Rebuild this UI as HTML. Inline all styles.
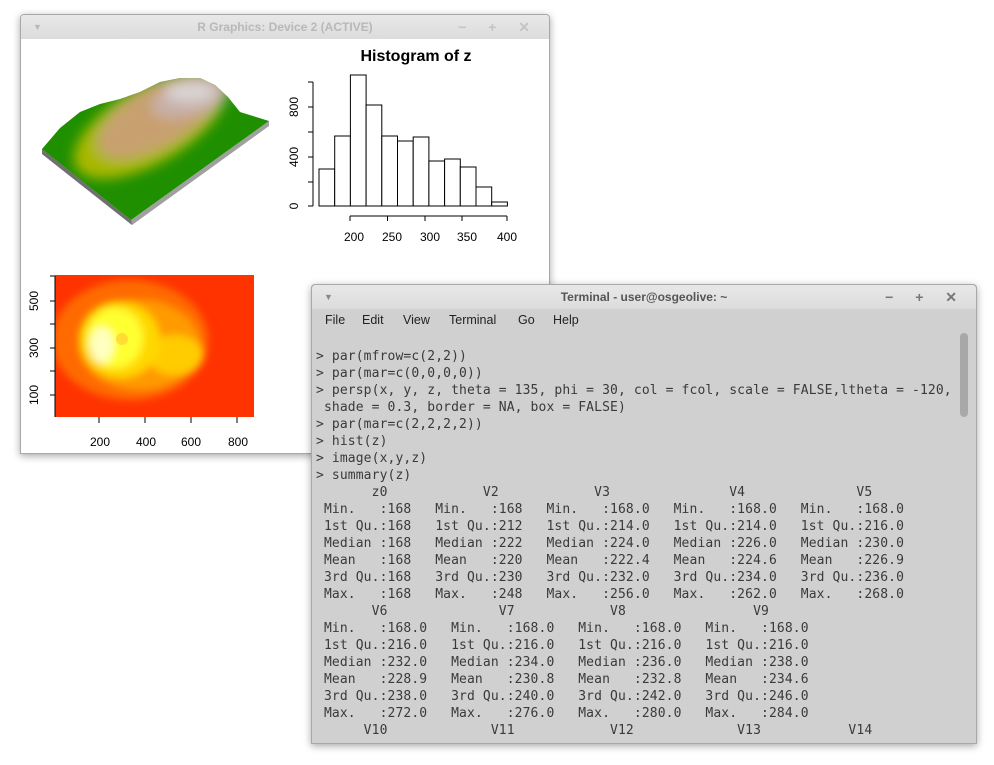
<!DOCTYPE html>
<html><head><meta charset="utf-8"><style>
body{margin:0;width:994px;height:765px;background:#fff;position:relative;overflow:hidden;font-family:"Liberation Sans",sans-serif}
.win{position:absolute;border:1px solid #a8a8a8;border-radius:4px 4px 0 0;box-shadow:0 2px 8px rgba(0,0,0,.35)}
.tb{height:24px;background:linear-gradient(#e8e8e8,#dcdcdc);position:relative;border-radius:4px 4px 0 0;font-size:12px;text-align:center;line-height:24px}
.ctl{position:absolute;right:10px;top:0;font-size:14px;letter-spacing:9px}
pre{margin:0;font-family:"DejaVu Sans Mono","Liberation Mono",monospace;font-size:13px;letter-spacing:.12px;line-height:17px;color:#3a3a3a}
.mn span{position:absolute;top:0}
</style></head><body>
<div class="win" style="left:20px;top:14px;width:528px;height:438px;background:#fff">
 <div class="tb" style="color:#b8b8b8;font-weight:bold">R Graphics: Device 2 (ACTIVE)<span style="position:absolute;left:12px;top:0;font-size:9px">▼</span><span class="ctl" style="color:#c4c4c4">− + ✕</span></div>
</div>
<svg style="position:absolute;left:0;top:0" width="994" height="765">
 <defs>
  <filter id="bl" x="-20%" y="-20%" width="140%" height="140%"><feGaussianBlur stdDeviation="6"/></filter>
  <filter id="bl2" x="-20%" y="-20%" width="140%" height="140%"><feGaussianBlur stdDeviation="4"/></filter>
  <clipPath id="ter"><polygon points="42,149 60,128 80,112 100,104 120,99 140,92 160,82 180,78 200,78 215,85 228,97 240,112 269,121 131,220"/></clipPath>
  <clipPath id="img"><rect x="55" y="275" width="199" height="142"/></clipPath>
 </defs>
 <polygon points="42,149 131,220 269,121 269,126 132,225 42,154" fill="#a0a0a0"/>
 <polygon points="42,149 42,154 132,225 131,220" fill="#707070"/>
 <g clip-path="url(#ter)">
  <rect x="40" y="70" width="240" height="160" fill="#1f8f00"/>
  <g filter="url(#bl)">
   <ellipse cx="150" cy="125" rx="85" ry="38" transform="rotate(-30 150 125)" fill="#a9b800"/>
   <ellipse cx="160" cy="115" rx="70" ry="30" transform="rotate(-30 160 115)" fill="#c8a070"/>
   <ellipse cx="190" cy="98" rx="40" ry="18" transform="rotate(-15 190 98)" fill="#c8b0a8"/>
   <ellipse cx="190" cy="92" rx="25" ry="10" fill="#d8d4d4"/>
  </g>
 </g>
 <text x="416" y="61" font-size="16" font-weight="bold" text-anchor="middle" font-family="Liberation Sans">Histogram of z</text>
 <g fill="#fff" stroke="#000" stroke-width="1">
  <rect x="319" y="169" width="15.7" height="37"/><rect x="334.7" y="136" width="15.7" height="70"/><rect x="350.4" y="75" width="15.7" height="131"/><rect x="366.1" y="105" width="15.7" height="101"/><rect x="381.8" y="136" width="15.7" height="70"/><rect x="397.5" y="141" width="15.7" height="65"/><rect x="413.2" y="137" width="15.7" height="69"/><rect x="428.9" y="161" width="15.7" height="45"/><rect x="444.6" y="159" width="15.7" height="47"/><rect x="460.3" y="167" width="15.7" height="39"/><rect x="476" y="187" width="15.7" height="19"/><rect x="491.7" y="202" width="15.7" height="4"/>
 </g>
 <g stroke="#000" fill="none"><path d="M350,216H507M350,216v5M387.5,216v5M425,216v5M462,216v5M507,216v5"/><path d="M313,82V206M313,82h-5M313,107h-5M313,132h-5M313,157h-5M313,182h-5M313,206h-5"/></g>
 <g font-size="12" font-family="Liberation Sans" text-anchor="middle"><text x="354" y="241">200</text><text x="392" y="241">250</text><text x="430" y="241">300</text><text x="467" y="241">350</text><text x="507" y="241">400</text></g>
 <g font-size="12" font-family="Liberation Sans" text-anchor="middle"><text transform="translate(298,206) rotate(-90)">0</text><text transform="translate(298,157) rotate(-90)">400</text><text transform="translate(298,107) rotate(-90)">800</text></g>
 <g clip-path="url(#img)">
  <rect x="55" y="275" width="199" height="142" fill="#ff3300"/>
  <g filter="url(#bl2)">
   <ellipse cx="130" cy="340" rx="78" ry="60" fill="#ff6a00"/>
   <ellipse cx="140" cy="345" rx="60" ry="45" fill="#ff9a00"/>
   <ellipse cx="175" cy="355" rx="28" ry="20" fill="#ffcc00"/>
   <ellipse cx="120" cy="340" rx="40" ry="38" fill="#ffd800"/>
   <ellipse cx="115" cy="338" rx="28" ry="30" fill="#ffff30"/>
   <ellipse cx="102" cy="345" rx="12" ry="18" fill="#ffffc0"/>
  </g>
  <circle cx="122" cy="339" r="6" fill="#ffdd33"/>
 </g>
 <g stroke="#000" fill="none"><path d="M55,276V417M55,276h-5M55,301h-5M55,324h-5M55,348h-5M55,371h-5M55,395h-5M99,417v6M145,417v6M191,417v6M237,417v6"/></g>
 <g font-size="12" font-family="Liberation Sans" text-anchor="middle"><text x="100" y="446">200</text><text x="146" y="446">400</text><text x="191" y="446">600</text><text x="238" y="446">800</text>
 <text transform="translate(38,395) rotate(-90)">100</text><text transform="translate(38,348) rotate(-90)">300</text><text transform="translate(38,301) rotate(-90)">500</text></g>
</svg>
<div class="win" style="left:311px;top:284px;width:664px;height:458px;background:#d0d0d0;overflow:hidden">
 <div class="tb" style="color:#555;font-size:12px;font-weight:bold">Terminal - user@osgeolive: ~<span style="position:absolute;left:12px;top:0;font-size:9px;color:#888">▼</span><span class="ctl" style="color:#777">− + ✕</span></div>
 <div class="mn" style="position:relative;height:22px;font-size:12.5px;color:#222;line-height:22px"><span style="left:13px">File</span><span style="left:50px">Edit</span><span style="left:91px">View</span><span style="left:137px">Terminal</span><span style="left:206px">Go</span><span style="left:241px">Help</span></div>
 <div style="position:absolute;left:648px;top:48px;width:8px;height:84px;background:#a8a8a8;border-radius:4px"></div>
 <pre style="position:absolute;left:4px;top:63px">&gt; par(mfrow=c(2,2))
&gt; par(mar=c(0,0,0,0))
&gt; persp(x, y, z, theta = 135, phi = 30, col = fcol, scale = FALSE,ltheta = -120,
 shade = 0.3, border = NA, box = FALSE)
&gt; par(mar=c(2,2,2,2))
&gt; hist(z)
&gt; image(x,y,z)
&gt; summary(z)
       z0            V2            V3               V4              V5
 Min.   :168   Min.   :168   Min.   :168.0   Min.   :168.0   Min.   :168.0
 1st Qu.:168   1st Qu.:212   1st Qu.:214.0   1st Qu.:214.0   1st Qu.:216.0
 Median :168   Median :222   Median :224.0   Median :226.0   Median :230.0
 Mean   :168   Mean   :220   Mean   :222.4   Mean   :224.6   Mean   :226.9
 3rd Qu.:168   3rd Qu.:230   3rd Qu.:232.0   3rd Qu.:234.0   3rd Qu.:236.0
 Max.   :168   Max.   :248   Max.   :256.0   Max.   :262.0   Max.   :268.0
       V6              V7            V8                V9
 Min.   :168.0   Min.   :168.0   Min.   :168.0   Min.   :168.0
 1st Qu.:216.0   1st Qu.:216.0   1st Qu.:216.0   1st Qu.:216.0
 Median :232.0   Median :234.0   Median :236.0   Median :238.0
 Mean   :228.9   Mean   :230.8   Mean   :232.8   Mean   :234.6
 3rd Qu.:238.0   3rd Qu.:240.0   3rd Qu.:242.0   3rd Qu.:246.0
 Max.   :272.0   Max.   :276.0   Max.   :280.0   Max.   :284.0
      V10             V11            V12             V13           V14</pre>
</div>
</body></html>
